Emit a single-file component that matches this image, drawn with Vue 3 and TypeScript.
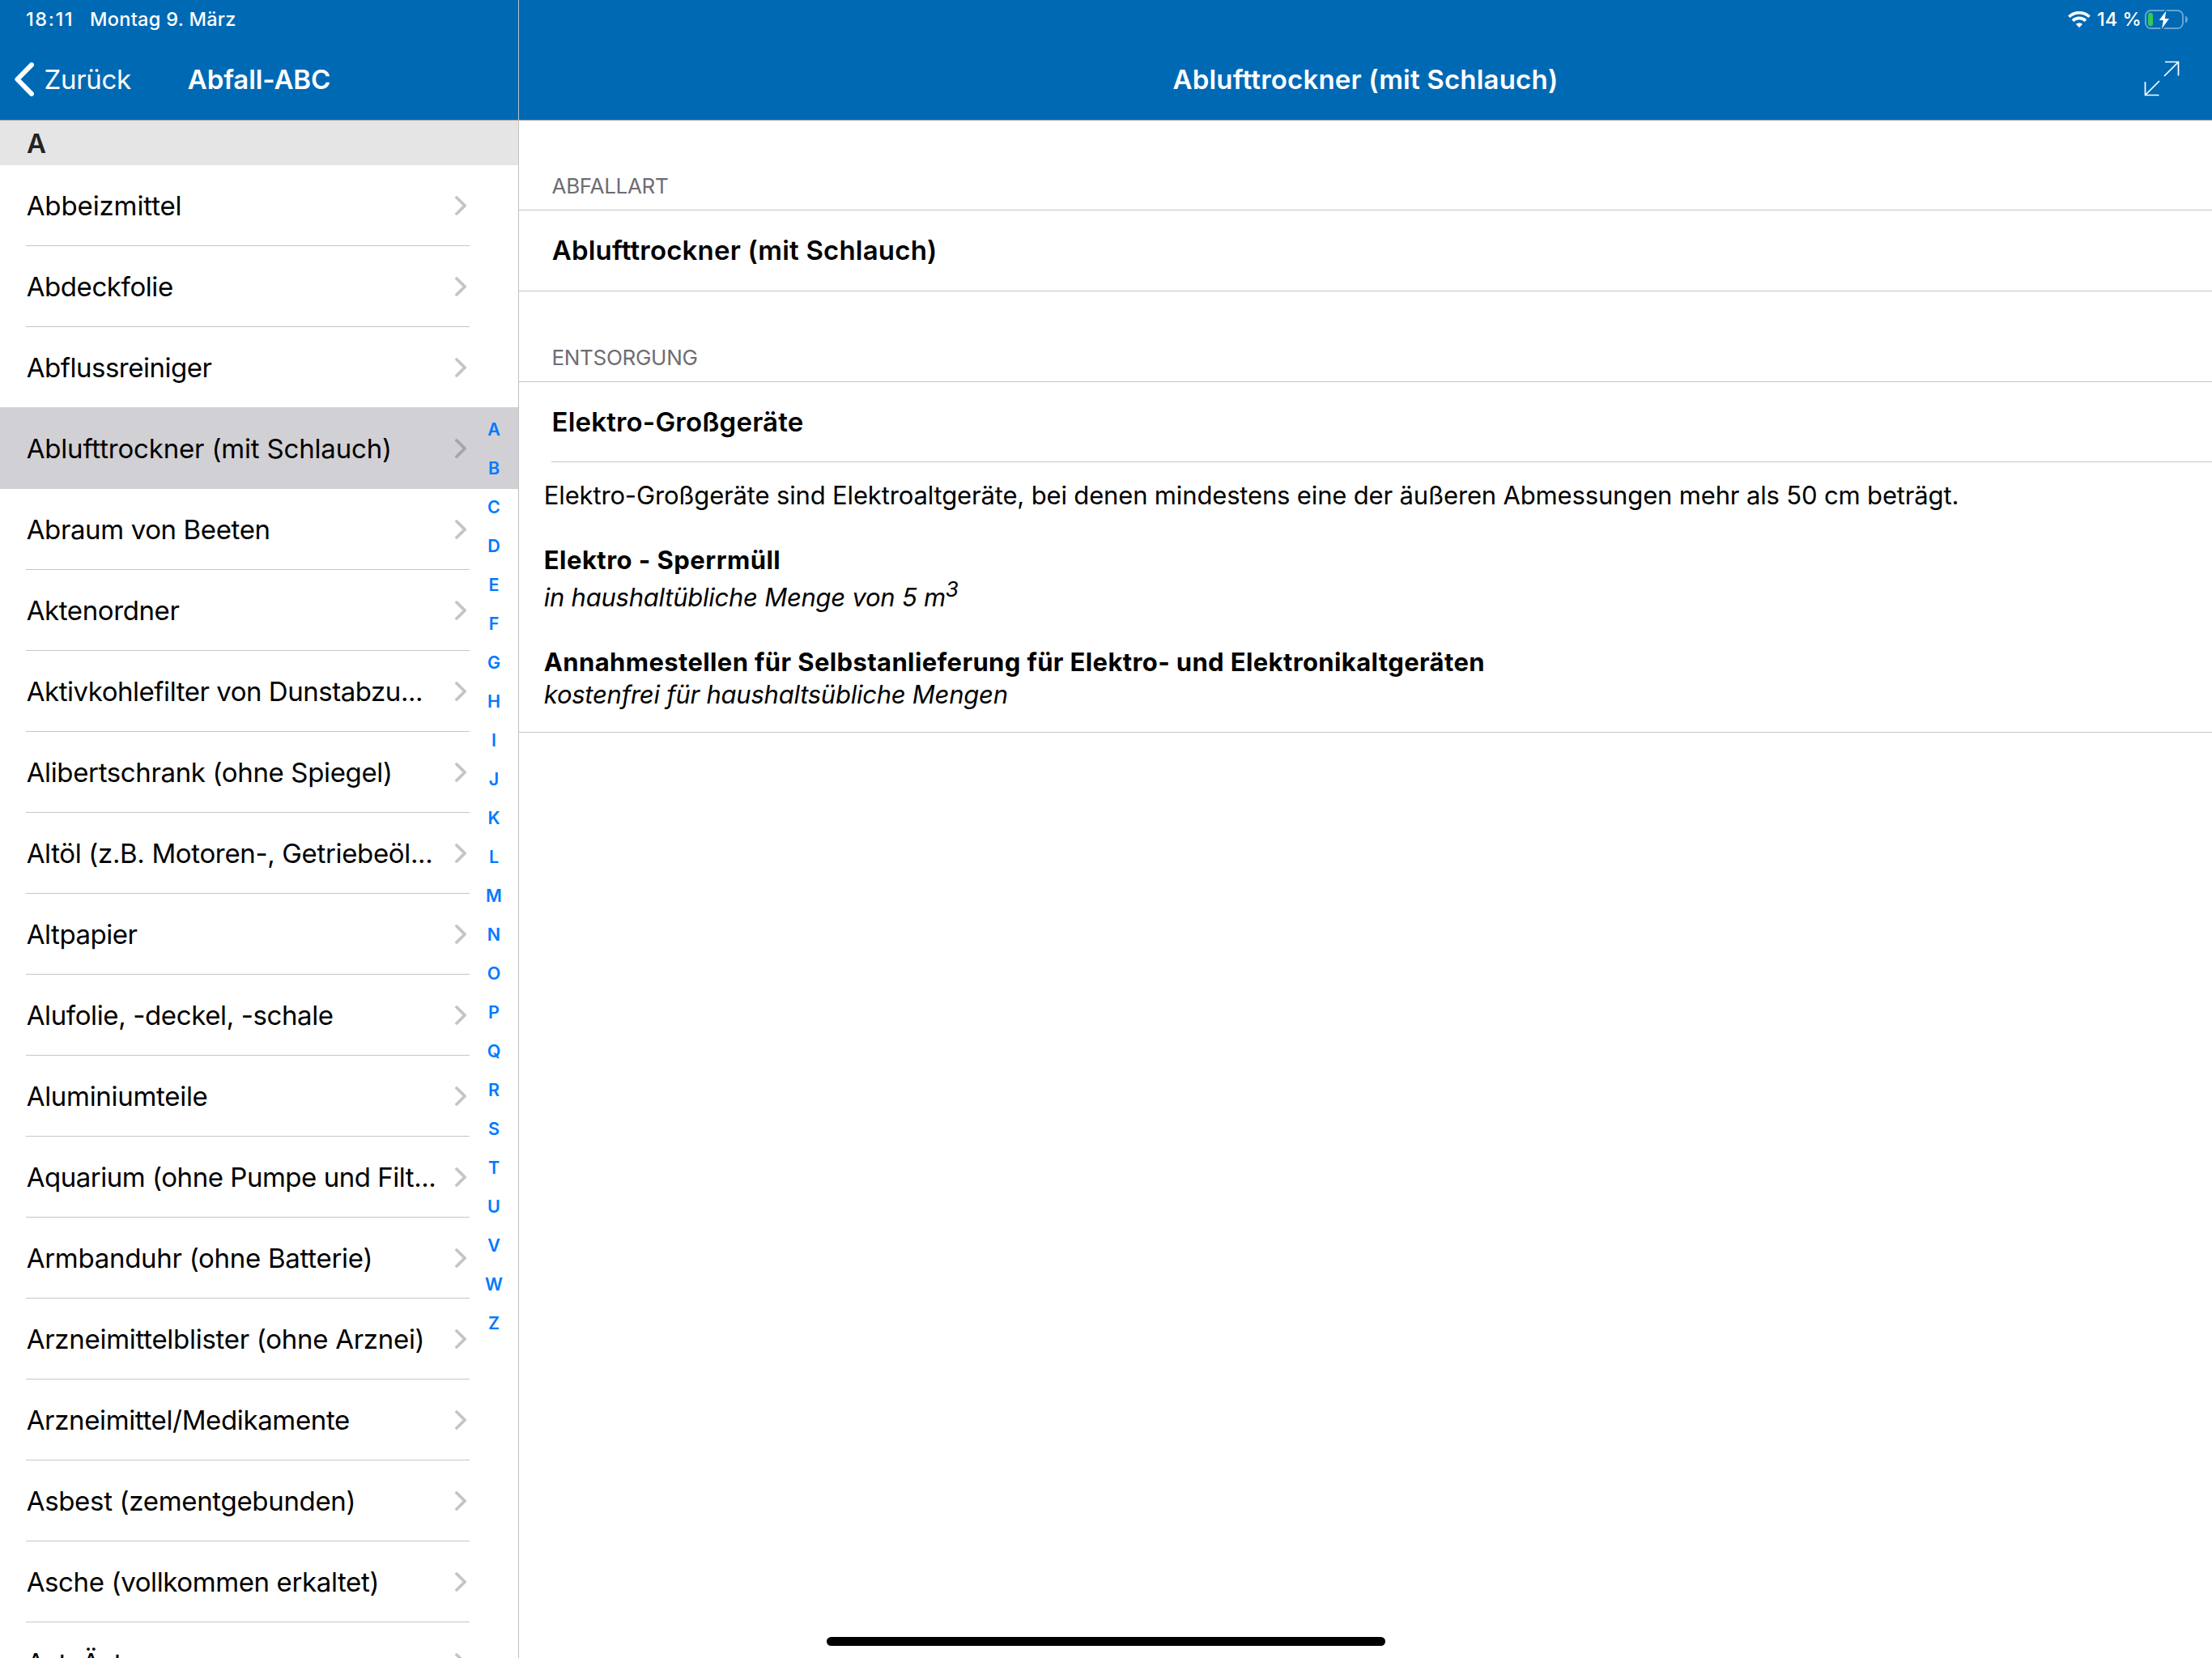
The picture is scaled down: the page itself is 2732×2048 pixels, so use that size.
<script setup lang="ts">
interface Entry {
  name: string
  tracking: number
  selected?: boolean
}

const entries: Entry[] = [
  { name: 'Abbeizmittel', tracking: -0.12 },
  { name: 'Abdeckfolie', tracking: -0.42 },
  { name: 'Abflussreiniger', tracking: -0.48 },
  { name: 'Ablufttrockner (mit Schlauch)', tracking: -0.18, selected: true },
  { name: 'Abraum von Beeten', tracking: -0.38 },
  { name: 'Aktenordner', tracking: -0.4 },
  { name: 'Aktivkohlefilter von Dunstabzu...', tracking: -0.46 },
  { name: 'Alibertschrank (ohne Spiegel)', tracking: -0.36 },
  { name: 'Altöl (z.B. Motoren-, Getriebeöl...', tracking: -0.35 },
  { name: 'Altpapier', tracking: -0.45 },
  { name: 'Alufolie, -deckel, -schale', tracking: -0.38 },
  { name: 'Aluminiumteile', tracking: -0.3 },
  { name: 'Aquarium (ohne Pumpe und Filt...', tracking: -0.47 },
  { name: 'Armbanduhr (ohne Batterie)', tracking: -0.28 },
  { name: 'Arzneimittelblister (ohne Arznei)', tracking: -0.28 },
  { name: 'Arzneimittel/Medikamente', tracking: -0.36 },
  { name: 'Asbest (zementgebunden)', tracking: -0.32 },
  { name: 'Asche (vollkommen erkaltet)', tracking: -0.38 },
  { name: 'Ast, Äste', tracking: -0.3 },
]

const letters: string[] = 'ABCDEFGHIJKLMNOPQRSTUVWZ'.split('')
</script>

<template>
  <div class="screen">
    <aside class="sidebar">
      <header class="bar">
        <div class="status status-left">
          <span class="time">18:11</span>
          <span class="date">Montag 9. März</span>
        </div>
        <div class="nav">
          <button class="back" type="button">
            <svg width="24" height="42" viewBox="0 0 24 42" fill="none">
              <path d="M21 3.2 3.4 21 21 38.8" stroke="#fff" stroke-width="6" stroke-linecap="round" stroke-linejoin="round" />
            </svg>
            <span>Zurück</span>
          </button>
          <h1 class="title title-left">Abfall-ABC</h1>
        </div>
      </header>

      <div class="list">
        <h2 class="section">A</h2>
        <ul class="rows">
          <li v-for="entry in entries" :key="entry.name" class="row" :class="{ selected: entry.selected }">
            <div class="cell">
              <span class="label" :style="{ letterSpacing: entry.tracking + 'px' }">{{ entry.name }}</span>
              <svg class="chevron" width="14" height="26" viewBox="0 0 14 26" fill="none">
                <path d="M2 3 12 13 2 23" stroke="currentColor" stroke-width="3.8" stroke-linecap="round" stroke-linejoin="miter" />
              </svg>
            </div>
          </li>
        </ul>
        <nav class="index">
          <span v-for="letter in letters" :key="letter">{{ letter }}</span>
        </nav>
      </div>
    </aside>

    <main class="detail">
      <header class="bar">
        <div class="status status-right">
          <svg class="wifi" width="28" height="20" viewBox="0 0 28 20" fill="none">
            <path d="M1.4 6.8A18 18 0 0 1 26.6 6.8" stroke="#fff" stroke-width="3.7" />
            <path d="M6 11.6A11.5 11.5 0 0 1 22 11.6" stroke="#fff" stroke-width="3.7" />
            <path d="M14 20 9.8 15.7A6.4 6.4 0 0 1 18.2 15.7Z" fill="#fff" />
          </svg>
          <span class="percent">14 %</span>
          <svg class="battery" width="54" height="26" viewBox="0 0 54 26" fill="none">
            <rect x="1" y="2" width="46" height="22" rx="6.5" stroke="#fff" stroke-opacity=".4" stroke-width="2" />
            <path d="M50 8.6c2 .6 3 2.3 3 4.4s-1 3.8-3 4.4Z" fill="#fff" fill-opacity=".42" />
            <rect x="4" y="4.8" width="6" height="16.4" rx="2.9" fill="#34c759" />
            <path d="M26.3 2.4 17.7 14h5.200l-1.900 10.600L30 12h-5.200Z" fill="#0069b4" stroke="#0069b4" stroke-width="4" />
            <path d="M26.3 2.4 17.7 14h5.200l-1.900 10.600L30 12h-5.200Z" fill="#fff" />
          </svg>
        </div>
        <div class="nav">
          <h1 class="title title-right">Ablufttrockner (mit Schlauch)</h1>
          <svg class="expand" width="44" height="44" viewBox="0 0 44 44" fill="none" stroke="#fff" stroke-width="1.7">
            <path d="M26 1.500H42.500V18.500M42.500 1.500 25 19" />
            <path d="M1.500 26V42.500H18.500M1.500 42.500 19 25" />
          </svg>
        </div>
      </header>

      <h3 class="group">Abfallart</h3>
      <div class="value">Ablufttrockner (mit Schlauch)</div>

      <h3 class="group second">Entsorgung</h3>
      <div class="value inset">Elektro-Großgeräte</div>

      <div class="body">
        <p class="intro">Elektro-Großgeräte sind Elektroaltgeräte, bei denen mindestens eine der äußeren Abmessungen mehr als 50 cm beträgt.</p>
        <p class="place"><b class="bulky">Elektro - Sperrmüll</b></p>
        <p class="note tall"><i>in haushaltübliche Menge von 5 m<sup>3</sup></i></p>
        <p class="place"><b>Annahmestellen für Selbstanlieferung für Elektro- und Elektronikaltgeräten</b></p>
        <p class="note"><i>kostenfrei für haushaltsübliche Mengen</i></p>
      </div>
    </main>

    <div class="home"></div>
  </div>
</template>

<style>
html,
body {
  margin: 0;
  background: #fff;
}
</style>

<style scoped>
* {
  box-sizing: border-box;
  margin: 0;
  padding: 0;
}

.screen {
  position: relative;
  display: flex;
  width: 2732px;
  height: 2048px;
  overflow: hidden;
  background: #fff;
  color: #000;
  font-family: Inter, "Liberation Sans", sans-serif;
  font-size: 33px;
  letter-spacing: -0.22px;
  white-space: nowrap;
}

.sidebar {
  width: 641px;
  height: 2048px;
  flex: none;
  border-right: 1px solid #c2c2c4;
  overflow: hidden;
}

.detail {
  flex: 1;
  min-width: 0;
}

.bar {
  height: 149px;
  background: #0069b4;
  border-bottom: 1px solid #a7a9ac;
  color: #fff;
}

.status {
  display: flex;
  align-items: center;
  height: 48px;
  font-size: 23.5px;
  font-weight: 500;
}

.status span {
  padding-bottom: 2px;
}

.status-left {
  padding-left: 32px;
}

.time {
  width: 79px;
  letter-spacing: 1.6px;
}

.date {
  letter-spacing: 0.3px;
}

.status-right {
  justify-content: flex-end;
  padding-right: 29px;
}

.percent {
  width: 67px;
  padding-left: 8px;
  letter-spacing: 0;
}

.nav {
  position: relative;
  display: flex;
  align-items: center;
  justify-content: center;
  height: 100px;
}

.back {
  position: absolute;
  left: 18px;
  top: 0;
  display: flex;
  align-items: center;
  gap: 12.5px;
  height: 100px;
  border: 0;
  background: none;
  color: #fff;
  font: inherit;
  letter-spacing: -0.3px;
}

.title {
  font-size: 33px;
  font-weight: 600;
}

.title-left {
  letter-spacing: -0.1px;
}

.title-right {
  letter-spacing: 0.19px;
}

.expand {
  position: absolute;
  right: 40px;
  top: 27px;
}

.list {
  position: relative;
}

.section {
  height: 55px;
  padding-left: 33px;
  background: #e5e5e5;
  color: #232323;
  font-size: 33px;
  font-weight: 600;
  line-height: 56px;
}

.rows {
  list-style: none;
}

.row {
  height: 100px;
  padding-left: 32px;
}

.cell {
  display: flex;
  align-items: center;
  justify-content: space-between;
  width: 548px;
  height: 100px;
  padding: 0 4px 0 0.7px;
  box-shadow: inset 0 -1px #c6c6c8;
}

.chevron {
  flex: none;
  color: #c5c5c7;
}

.row.selected {
  position: relative;
  background: #d1d0d5;
  box-shadow: 0 -1px #d1d0d5;
}

.row.selected .cell {
  box-shadow: none;
}

.row.selected .chevron {
  color: #a6a5aa;
}

.index {
  position: absolute;
  z-index: 1;
  top: 356.5px;
  right: 0;
  display: flex;
  flex-direction: column;
  width: 60px;
  color: #007aff;
  font-size: 21.5px;
  font-weight: 600;
  line-height: 48px;
  letter-spacing: 0;
  text-align: center;
}

.group {
  display: flex;
  align-items: flex-end;
  height: 111px;
  padding: 0 0 13px 40.5px;
  border-bottom: 1px solid #c6c6c8;
  color: #6d6d72;
  font-size: 26px;
  font-weight: 400;
  line-height: 32px;
  letter-spacing: -0.3px;
  text-transform: uppercase;
}

.group.second {
  height: 112px;
}

.value {
  display: flex;
  align-items: center;
  height: 100px;
  padding: 0 0 2px 40.7px;
  border-bottom: 1px solid #c6c6c8;
  font-weight: 600;
  letter-spacing: 0.19px;
}

.value.inset {
  height: 99px;
  margin-left: 40px;
  padding-left: 0.5px;
  padding-bottom: 1px;
}

.body {
  height: 334px;
  padding: 21px 0 0 30.8px;
  border-bottom: 1px solid #c6c6c8;
  font-size: 31px;
  line-height: 40px;
}

.intro {
  letter-spacing: -0.155px;
}

.place {
  margin-top: 40px;
  letter-spacing: 0.38px;
}

.bulky {
  letter-spacing: 0.47px;
}

.note {
  letter-spacing: -0.25px;
}

.note.tall {
  padding-top: 6px;
}

.note sup {
  position: relative;
  top: -12px;
  font-size: 26px;
  line-height: 0;
  vertical-align: baseline;
}

.home {
  position: absolute;
  left: 1021px;
  top: 2022px;
  width: 690px;
  height: 11px;
  border-radius: 5.5px;
  background: #000;
}
</style>
